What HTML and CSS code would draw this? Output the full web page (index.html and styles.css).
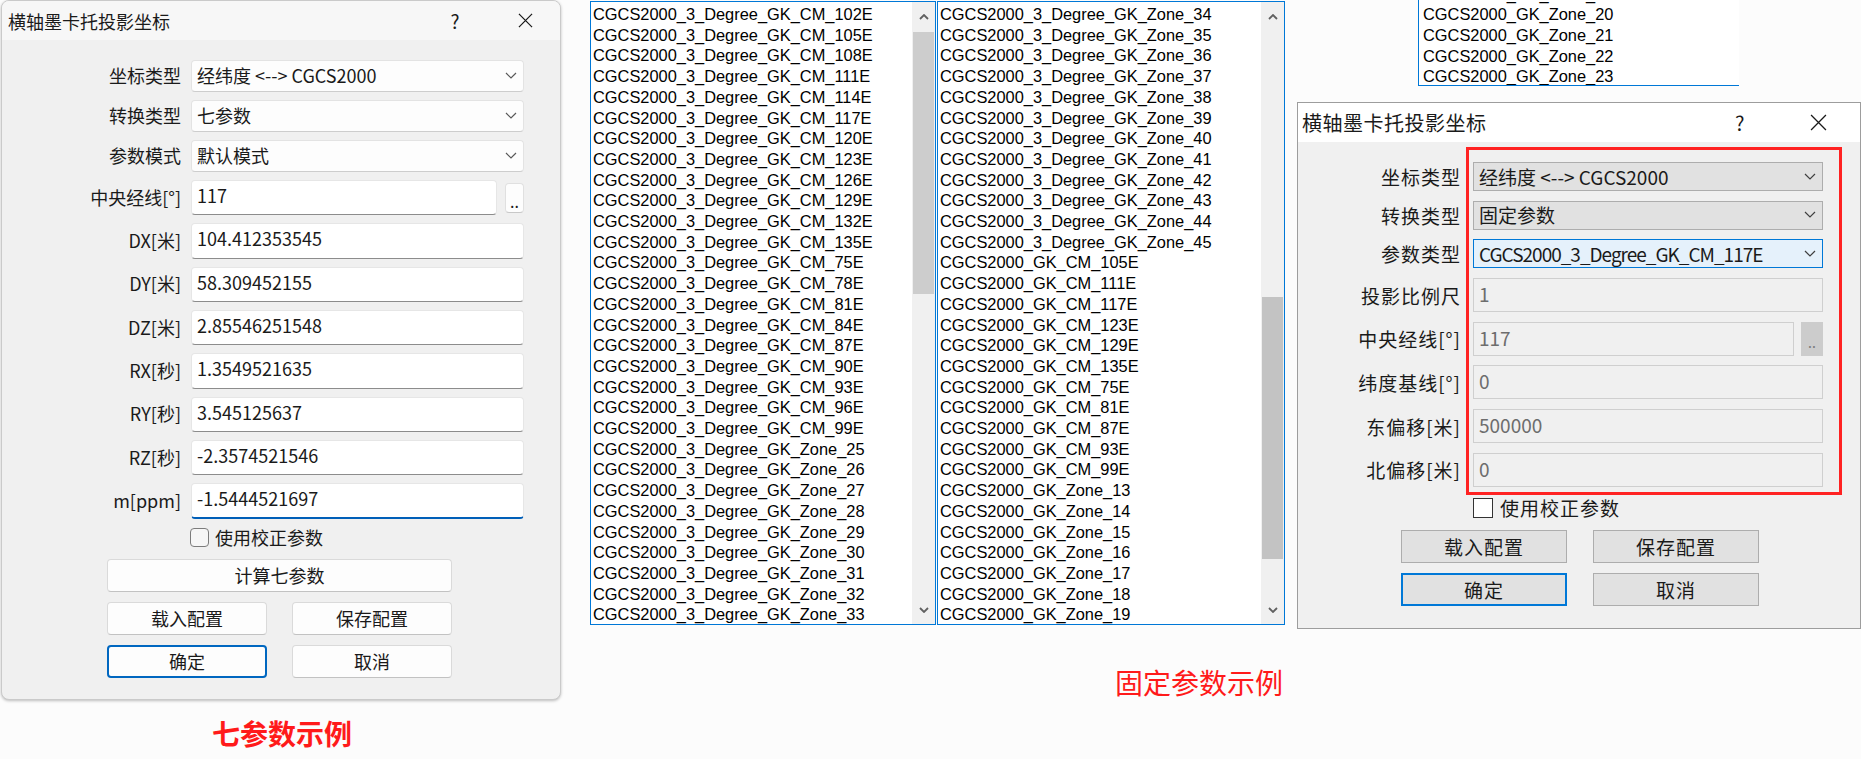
FILE: index.html
```html
<!DOCTYPE html>
<html lang="zh-CN">

<head>
  <meta charset="utf-8">
  <meta name="viewport" content="width=device-width">
  <title>横轴墨卡托投影坐标</title>
  <link rel="stylesheet" href="styles.css">
</head>

<body>
  <main class="sheet">

    <!-- 七参数示例 -->
    <section class="col-seven">
      <div class="dlg dlg-w11">
        <div class="dlg-title">
          <span class="dlg-name">横轴墨卡托投影坐标</span>
          <span class="tb-help">?</span>
          <span class="tb-close">
            <svg viewBox="0 0 16 16" width="15" height="15"><path d="M1 1L15 15M15 1L1 15" stroke="#1a1a1a" stroke-width="1.3" fill="none"/></svg>
          </span>
        </div>

        <div class="form-w11">
          <label>坐标类型</label>
          <div class="combo">经纬度 &lt;--&gt; CGCS2000
            <svg class="chev" viewBox="0 0 12 7" width="12" height="7"><polyline points="1,1 6,6 11,1" /></svg>
          </div>
          <label>转换类型</label>
          <div class="combo">七参数
            <svg class="chev" viewBox="0 0 12 7" width="12" height="7"><polyline points="1,1 6,6 11,1" /></svg>
          </div>
          <label>参数模式</label>
          <div class="combo">默认模式
            <svg class="chev" viewBox="0 0 12 7" width="12" height="7"><polyline points="1,1 6,6 11,1" /></svg>
          </div>
          <label>中央经线[°]</label>
          <div class="field-pair">
            <div class="edit">117</div>
            <div class="dots">..</div>
          </div>
          <label>DX[米]</label>
          <div class="edit">104.412353545</div>
          <label>DY[米]</label>
          <div class="edit">58.309452155</div>
          <label>DZ[米]</label>
          <div class="edit">2.85546251548</div>
          <label>RX[秒]</label>
          <div class="edit">1.3549521635</div>
          <label>RY[秒]</label>
          <div class="edit">3.545125637</div>
          <label>RZ[秒]</label>
          <div class="edit">-2.3574521546</div>
          <label>m[ppm]</label>
          <div class="edit focused">-1.5444521697</div>
        </div>

        <div class="check-w11">
          <span class="box"></span>
          <span>使用校正参数</span>
        </div>

        <div class="btns-w11">
          <button class="btn wide">计算七参数</button>
          <button class="btn">载入配置</button>
          <button class="btn">保存配置</button>
          <button class="btn default">确定</button>
          <button class="btn">取消</button>
        </div>
      </div>
      <p class="caption bold">七参数示例</p>
    </section>

    <!-- 固定参数示例 -->
    <section class="col-fixed">
      <div class="fixed-row">
        <div class="list list-a">
          <div class="list-items">
            <div>CGCS2000_3_Degree_GK_CM_102E</div>
            <div>CGCS2000_3_Degree_GK_CM_105E</div>
            <div>CGCS2000_3_Degree_GK_CM_108E</div>
            <div>CGCS2000_3_Degree_GK_CM_111E</div>
            <div>CGCS2000_3_Degree_GK_CM_114E</div>
            <div>CGCS2000_3_Degree_GK_CM_117E</div>
            <div>CGCS2000_3_Degree_GK_CM_120E</div>
            <div>CGCS2000_3_Degree_GK_CM_123E</div>
            <div>CGCS2000_3_Degree_GK_CM_126E</div>
            <div>CGCS2000_3_Degree_GK_CM_129E</div>
            <div>CGCS2000_3_Degree_GK_CM_132E</div>
            <div>CGCS2000_3_Degree_GK_CM_135E</div>
            <div>CGCS2000_3_Degree_GK_CM_75E</div>
            <div>CGCS2000_3_Degree_GK_CM_78E</div>
            <div>CGCS2000_3_Degree_GK_CM_81E</div>
            <div>CGCS2000_3_Degree_GK_CM_84E</div>
            <div>CGCS2000_3_Degree_GK_CM_87E</div>
            <div>CGCS2000_3_Degree_GK_CM_90E</div>
            <div>CGCS2000_3_Degree_GK_CM_93E</div>
            <div>CGCS2000_3_Degree_GK_CM_96E</div>
            <div>CGCS2000_3_Degree_GK_CM_99E</div>
            <div>CGCS2000_3_Degree_GK_Zone_25</div>
            <div>CGCS2000_3_Degree_GK_Zone_26</div>
            <div>CGCS2000_3_Degree_GK_Zone_27</div>
            <div>CGCS2000_3_Degree_GK_Zone_28</div>
            <div>CGCS2000_3_Degree_GK_Zone_29</div>
            <div>CGCS2000_3_Degree_GK_Zone_30</div>
            <div>CGCS2000_3_Degree_GK_Zone_31</div>
            <div>CGCS2000_3_Degree_GK_Zone_32</div>
            <div>CGCS2000_3_Degree_GK_Zone_33</div>
          </div>
          <div class="sbar">
            <div class="sb-btn"><svg viewBox="0 0 10 6" width="10" height="6"><polyline points="1,5 5,1 9,5" /></svg></div>
            <div class="sb-track"><div class="thumb thumb-top"></div></div>
            <div class="sb-btn"><svg viewBox="0 0 10 6" width="10" height="6"><polyline points="1,1 5,5 9,1" /></svg></div>
          </div>
        </div>

        <div class="list list-b">
          <div class="list-items">
            <div>CGCS2000_3_Degree_GK_Zone_34</div>
            <div>CGCS2000_3_Degree_GK_Zone_35</div>
            <div>CGCS2000_3_Degree_GK_Zone_36</div>
            <div>CGCS2000_3_Degree_GK_Zone_37</div>
            <div>CGCS2000_3_Degree_GK_Zone_38</div>
            <div>CGCS2000_3_Degree_GK_Zone_39</div>
            <div>CGCS2000_3_Degree_GK_Zone_40</div>
            <div>CGCS2000_3_Degree_GK_Zone_41</div>
            <div>CGCS2000_3_Degree_GK_Zone_42</div>
            <div>CGCS2000_3_Degree_GK_Zone_43</div>
            <div>CGCS2000_3_Degree_GK_Zone_44</div>
            <div>CGCS2000_3_Degree_GK_Zone_45</div>
            <div>CGCS2000_GK_CM_105E</div>
            <div>CGCS2000_GK_CM_111E</div>
            <div>CGCS2000_GK_CM_117E</div>
            <div>CGCS2000_GK_CM_123E</div>
            <div>CGCS2000_GK_CM_129E</div>
            <div>CGCS2000_GK_CM_135E</div>
            <div>CGCS2000_GK_CM_75E</div>
            <div>CGCS2000_GK_CM_81E</div>
            <div>CGCS2000_GK_CM_87E</div>
            <div>CGCS2000_GK_CM_93E</div>
            <div>CGCS2000_GK_CM_99E</div>
            <div>CGCS2000_GK_Zone_13</div>
            <div>CGCS2000_GK_Zone_14</div>
            <div>CGCS2000_GK_Zone_15</div>
            <div>CGCS2000_GK_Zone_16</div>
            <div>CGCS2000_GK_Zone_17</div>
            <div>CGCS2000_GK_Zone_18</div>
            <div>CGCS2000_GK_Zone_19</div>
          </div>
          <div class="sbar">
            <div class="sb-btn"><svg viewBox="0 0 10 6" width="10" height="6"><polyline points="1,5 5,1 9,5" /></svg></div>
            <div class="sb-track"><div class="thumb thumb-mid"></div></div>
            <div class="sb-btn"><svg viewBox="0 0 10 6" width="10" height="6"><polyline points="1,1 5,5 9,1" /></svg></div>
          </div>
        </div>

        <div class="col-right">
          <div class="mini-list">
            <div class="mini-items">
              <div>CGCS2000_GK_Zone_19</div>
              <div>CGCS2000_GK_Zone_20</div>
              <div>CGCS2000_GK_Zone_21</div>
              <div>CGCS2000_GK_Zone_22</div>
              <div>CGCS2000_GK_Zone_23</div>
            </div>
          </div>

          <div class="dlg dlg-w10">
            <div class="dlg-title">
              <span class="dlg-name">横轴墨卡托投影坐标</span>
              <span class="tb-help">?</span>
              <span class="tb-close">
                <svg viewBox="0 0 16 16" width="17" height="17"><path d="M1 1L15 15M15 1L1 15" stroke="#1a1a1a" stroke-width="1.2" fill="none"/></svg>
              </span>
            </div>

            <div class="form-w10">
              <div class="labels">
                <label class="short">坐标类型</label>
                <label class="short">转换类型</label>
                <label class="short">参数类型</label>
                <label>投影比例尺</label>
                <label>中央经线[°]</label>
                <label>纬度基线[°]</label>
                <label>东偏移[米]</label>
                <label>北偏移[米]</label>
              </div>
              <div class="red-box">
                <div class="combo10">经纬度 &lt;--&gt; CGCS2000
                  <svg class="chev" viewBox="0 0 12 7" width="12" height="7"><polyline points="1,1 6,6 11,1" /></svg>
                </div>
                <div class="combo10">固定参数
                  <svg class="chev" viewBox="0 0 12 7" width="12" height="7"><polyline points="1,1 6,6 11,1" /></svg>
                </div>
                <div class="combo10 selected"><span class="code-name">CGCS2000_3_Degree_GK_CM_117E</span>
                  <svg class="chev" viewBox="0 0 12 7" width="12" height="7"><polyline points="1,1 6,6 11,1" /></svg>
                </div>
                <div class="edit10">1</div>
                <div class="field-pair10">
                  <div class="edit10">117</div>
                  <div class="dots10">..</div>
                </div>
                <div class="edit10">0</div>
                <div class="edit10">500000</div>
                <div class="edit10">0</div>
              </div>
            </div>

            <div class="check-w10">
              <span class="box"></span>
              <span>使用校正参数</span>
            </div>

            <div class="btns-w10">
              <button class="btn10">载入配置</button>
              <button class="btn10">保存配置</button>
              <button class="btn10 default">确定</button>
              <button class="btn10">取消</button>
            </div>
          </div>
        </div>
      </div>
      <p class="caption caption-fixed">固定参数示例</p>
    </section>

  </main>
</body>

</html>
```

FILE: styles.css
```css
body {
  margin: 0;
  width: 1861px;
  height: 759px;
  overflow: hidden;
  background-color: #fcfcfc;
  font-family: "Noto Sans CJK SC", sans-serif;
  color: #1a1a1a;
}

.sheet {
  display: flex;
  align-items: flex-start;
}

label {
  display: block;
}

button {
  font-family: inherit;
  color: inherit;
  padding: 0;
}

.chev polyline {
  fill: none;
  stroke: currentColor;
  stroke-width: 1.2;
}

/* 标题 */
.caption {
  margin: 17px 0 0;
  font-size: 28px;
  line-height: 32px;
  color: #ff1a1a;
  text-align: center;
}

.caption.bold {
  font-weight: bold;
}

.caption-fixed {
  margin-top: 37px;
  padding-left: 525px;
  text-align: left;
}

/* ---------- 左侧 Win11 对话框 ---------- */
.col-seven {
  width: 564px;
  flex: none;
}

.dlg-w11 {
  margin-left: 1px;
  width: 560px;
  height: 700px;
  box-sizing: border-box;
  border: 1px solid #cacaca;
  border-radius: 8px;
  background-color: #f0f0f0;
  box-shadow: 0 1px 3px rgba(0, 0, 0, 0.25);
  overflow: hidden;
}

.dlg-title {
  display: flex;
  align-items: center;
}

.dlg-w11 .dlg-title {
  height: 39px;
  padding-left: 6px;
  background-color: #f7f7f7;
  font-size: 18px;
}

.dlg-name {
  flex: 1;
}

.tb-help {
  width: 30px;
  text-align: center;
}

.tb-close {
  width: 30px;
  display: flex;
  justify-content: center;
}

.dlg-w11 .tb-help {
  font-size: 19px;
}

.dlg-w11 .tb-close {
  margin-left: 40px;
  margin-right: 20px;
}

.form-w11 {
  display: grid;
  grid-template-columns: 170px 333px;
  column-gap: 10px;
  row-gap: 8px;
  padding: 20px 0 0 9px;
  font-size: 18px;
}

.form-w11 label {
  align-self: center;
  text-align: right;
  line-height: 1;
  padding-bottom: 2px;
}

.combo {
  height: 32px;
  box-sizing: border-box;
  display: flex;
  align-items: center;
  padding: 0 6px 2px 5px;
  background-color: #fdfdfd;
  border: 1px solid #e3e3e3;
  border-bottom-color: #cdcdcd;
  border-radius: 4px;
}

.combo .chev {
  margin-left: auto;
  color: #5a5a5a;
}

.edit {
  height: 35.33px;
  box-sizing: border-box;
  display: flex;
  align-items: center;
  padding: 0 5px 5px;
  background-color: #ffffff;
  border: 1px solid #e6e6e6;
  border-bottom-color: #8c8c8c;
  border-radius: 4px;
}

.edit.focused {
  border-bottom: 2px solid #005fb8;
}

.field-pair {
  display: flex;
  align-items: center;
  gap: 8px;
}

.field-pair .edit {
  flex: 1;
}

.dots {
  width: 19px;
  height: 30px;
  box-sizing: border-box;
  background-color: #fdfdfd;
  border: 1px solid #e0e0e0;
  border-bottom-color: #c8c8c8;
  border-radius: 4px;
  text-align: center;
  line-height: 34px;
  font-size: 16px;
}

.check-w11 {
  display: flex;
  align-items: center;
  gap: 6px;
  margin-top: 8px;
  padding-left: 188px;
  height: 21px;
  font-size: 18px;
}

.check-w11 .box {
  width: 19px;
  height: 19px;
  box-sizing: border-box;
  border: 1px solid #7c7c7c;
  border-radius: 4px;
  background-color: #f6f6f6;
}

.btns-w11 {
  display: grid;
  grid-template-columns: 160px 160px;
  column-gap: 25px;
  row-gap: 10px;
  margin-top: 11px;
  padding-left: 105px;
}

.btn {
  height: 33px;
  box-sizing: border-box;
  font-size: 18px;
  background-color: #fdfdfd;
  border: 1px solid #dadada;
  border-bottom-color: #c2c2c2;
  border-radius: 4px;
}

.btn.wide {
  grid-column: 1 / -1;
}

.btn.default {
  border: 2px solid #0067c0;
}

/* ---------- 列表 ---------- */
.col-fixed {
  margin-left: 26px;
  flex: none;
}

.fixed-row {
  display: flex;
  align-items: flex-start;
}

.list {
  height: 624px;
  margin-top: 1px;
  box-sizing: border-box;
  border: 1px solid #0078d7;
  background-color: #ffffff;
  display: flex;
  overflow: hidden;
}

.list-a {
  width: 346px;
}

.list-b {
  width: 348px;
  margin-left: 1px;
}

.list-items,
.mini-items {
  font-family: "Liberation Sans", Arial, sans-serif;
  font-size: 16.4px;
  line-height: 20.7px;
  color: #000;
  white-space: nowrap;
}

.list-items {
  flex: 1;
  padding: 2px 0 0 2px;
}

.sbar {
  width: 23px;
  flex: none;
  display: flex;
  flex-direction: column;
  background-color: #f0f0f0;
}

.sb-btn {
  height: 29px;
  display: flex;
  align-items: center;
  justify-content: center;
}

.sb-btn polyline {
  fill: none;
  stroke: #606060;
  stroke-width: 1.8;
}

.sb-track {
  flex: 1;
}

.thumb {
  margin: 0 1px;
  height: 262px;
}

.thumb-top {
  margin-top: 1px;
  background-color: #cdcdcd;
}

.thumb-mid {
  margin-top: 266px;
  background-color: #c3c3c3;
}

/* ---------- 右侧 ---------- */
.col-right {
  margin-left: 12px;
  width: 564px;
  flex: none;
}

.mini-list {
  margin-left: 121px;
  width: 321px;
  height: 86px;
  box-sizing: border-box;
  border-left: 1px solid #0078d7;
  border-bottom: 1px solid #0078d7;
  background-color: #ffffff;
  overflow: hidden;
}

.mini-items {
  margin-top: -16.5px;
  padding-left: 4px;
}

.dlg-w10 {
  margin-top: 16px;
  width: 564px;
  height: 527px;
  box-sizing: border-box;
  border: 1px solid #9d9d9d;
  background-color: #f0f0f0;
  font-size: 19px;
}

.dlg-w10 .dlg-title {
  height: 39px;
  padding-left: 4px;
  background-color: #ffffff;
  font-size: 20px;
  letter-spacing: 0.5px;
}

.dlg-w10 .tb-help {
  font-size: 20px;
}

.dlg-w10 .tb-close {
  margin-left: 48px;
  margin-right: 27px;
}

.form-w10 {
  display: flex;
  padding-top: 5px;
}

.labels {
  width: 162px;
  margin-right: 6px;
  padding-top: 15px;
  display: flex;
  flex-direction: column;
  gap: 9.7px;
}

.labels label {
  height: 34px;
  display: flex;
  align-items: center;
  justify-content: flex-end;
  letter-spacing: 1px;
  margin-right: -1px;
}

.labels label.short {
  height: 29px;
}

.red-box {
  width: 376px;
  box-sizing: border-box;
  border: 3px solid #ff2222;
  padding: 12px 16px 5px 4px;
  display: flex;
  flex-direction: column;
  gap: 9.7px;
}

.combo10 {
  height: 29px;
  box-sizing: border-box;
  display: flex;
  align-items: center;
  padding: 0 6px 1px 5px;
  background-color: #e1e1e1;
  border: 1px solid #adadad;
}

.combo10.selected {
  background-color: #e5f1fb;
  border-color: #0078d7;
}

.code-name {
  letter-spacing: -1px;
}

.combo10 .chev {
  margin-left: auto;
  color: #404040;
}

.edit10 {
  height: 34px;
  box-sizing: border-box;
  display: flex;
  align-items: center;
  padding: 0 5px 3px;
  background-color: #f0f0f0;
  border: 1px solid #cfcfcf;
  color: #6d6d6d;
}

.field-pair10 {
  display: flex;
  gap: 7px;
}

.field-pair10 .edit10 {
  flex: 1;
}

.dots10 {
  width: 22px;
  height: 34px;
  background-color: #cccccc;
  color: #7a7a7a;
  text-align: center;
  line-height: 40px;
  font-size: 14px;
}

.check-w10 {
  display: flex;
  align-items: center;
  gap: 7px;
  margin-top: 3px;
  padding-left: 175px;
  height: 20px;
  letter-spacing: 1px;
}

.check-w10 .box {
  width: 20px;
  height: 20px;
  box-sizing: border-box;
  border: 1px solid #333333;
  background-color: #ffffff;
}

.btns-w10 {
  display: grid;
  grid-template-columns: 166px 166px;
  column-gap: 26px;
  row-gap: 10px;
  margin-top: 12px;
  padding-left: 103px;
}

.btn10 {
  height: 33px;
  box-sizing: border-box;
  font-size: 19px;
  letter-spacing: 1px;
  background-color: #e1e1e1;
  border: 1px solid #adadad;
}

.btn10.default {
  border: 2px solid #0078d7;
}
```
